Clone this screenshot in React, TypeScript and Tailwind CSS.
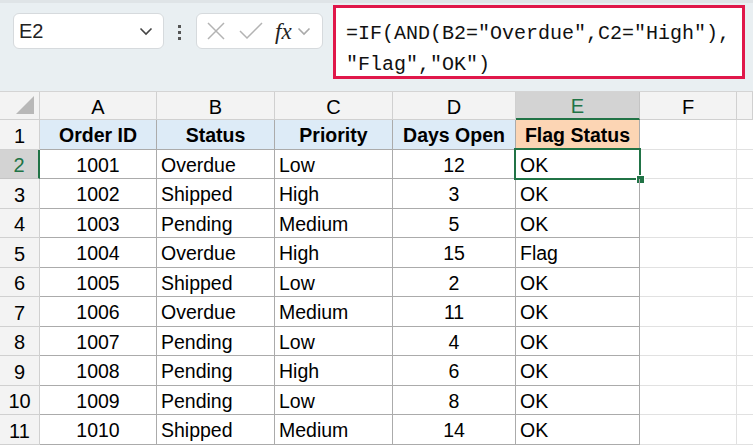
import React from "react";

const rows = [
  ["1001", "Overdue", "Low", "12", "OK"],
  ["1002", "Shipped", "High", "3", "OK"],
  ["1003", "Pending", "Medium", "5", "OK"],
  ["1004", "Overdue", "High", "15", "Flag"],
  ["1005", "Shipped", "Low", "2", "OK"],
  ["1006", "Overdue", "Medium", "11", "OK"],
  ["1007", "Pending", "Low", "4", "OK"],
  ["1008", "Pending", "High", "6", "OK"],
  ["1009", "Pending", "Low", "8", "OK"],
  ["1010", "Shipped", "Medium", "14", "OK"],
];

const headers = ["Order ID", "Status", "Priority", "Days Open", "Flag Status"];
const cols = ["A", "B", "C", "D", "E", "F", ""];

function Chevron({ className }: { className?: string }) {
  return (
    <svg width="14" height="9" viewBox="0 0 14 9" className={className}>
      <path d="M1.5 1.5 L7 7 L12.5 1.5" fill="none" stroke="currentColor" strokeWidth="1.6" />
    </svg>
  );
}

export default function App() {
  const cell = "h-[29.5px] flex items-center pt-[3px] border-r border-b border-[#ababab] text-[19.5px] text-black overflow-hidden whitespace-nowrap";
  return (
    <div className="w-[753px] h-[446px] overflow-hidden bg-white font-['Liberation_Sans',Arial,sans-serif]">
      {/* formula bar */}
      <div className="h-[91px] bg-[#e9eff2] border-t-[3px] border-[#dfe4e7] flex items-start">
        <div className="mt-[10px] ml-[13px] w-[151px] h-[36px] bg-white border border-[#d6dadd] rounded-[6px] flex items-center justify-between pl-[5px] pr-[10px]">
          <span className="text-[20px] text-[#222]">E2</span>
          <Chevron className="text-[#444]" />
        </div>
        <div className="mt-[22px] ml-[14px] w-[4px] flex flex-col gap-[3px]">
          <div className="w-[3px] h-[3px] bg-[#555]" />
          <div className="w-[3px] h-[3px] bg-[#555]" />
          <div className="w-[3px] h-[3px] bg-[#555]" />
        </div>
        <div className="mt-[10px] ml-[14px] w-[127px] h-[36px] bg-white border border-[#d6dadd] rounded-[6px] flex items-center pl-[9px]">
          <svg width="20" height="20" viewBox="0 0 20 20">
            <path d="M2 2 L18 18 M18 2 L2 18" stroke="#b3b3b3" strokeWidth="1.5" />
          </svg>
          <svg width="24" height="18" viewBox="0 0 24 18" className="ml-[13px]">
            <path d="M1 9 L8 16 L23 1" fill="none" stroke="#b3b3b3" strokeWidth="1.5" />
          </svg>
          <span className="ml-[12px] text-[23px] italic text-[#222] font-['Liberation_Serif',serif] leading-none">fx</span>
          <Chevron className="ml-[5px] text-[#aaa]" />
        </div>
        <div className="mt-[2px] ml-[10px] w-[412px] h-[74px] bg-white border-[3px] border-[#e0174a] pl-[10px] pt-[10px] font-['Liberation_Mono',monospace] text-[20px] leading-[31px] text-[#111] whitespace-pre">
          {'=IF(AND(B2="Overdue",C2="High"),\n"Flag","OK")'}
        </div>
      </div>

      {/* sheet */}
      <div className="grid grid-cols-[40px_117px_118px_118px_123px_124px_97px_1fr] border-t border-[#d4d4d4]">
        {/* column headers */}
        <div className="h-[28px] bg-[#f3f3f3] border-r border-b border-[#d0d0d0] relative">
          <svg width="18" height="18" viewBox="0 0 18 18" className="absolute right-[5px] bottom-[5px]">
            <path d="M18 0 L18 18 L0 18 Z" fill="#b8b8b8" />
          </svg>
        </div>
        {cols.map((c, i) =>
          c === "E" ? (
            <div key={i} className="h-[28px] pt-[2px] bg-[#d3d3d3] border-r border-[#c4c4c4] border-b-2 border-b-[#217346] flex items-center justify-center text-[20px] text-[#217346]">
              {c}
            </div>
          ) : (
            <div key={i} className="h-[28px] pt-[2px] bg-[#f3f3f3] border-r border-b border-[#d0d0d0] flex items-center justify-center text-[20px] text-black">
              {c}
            </div>
          )
        )}

        {/* row 1 */}
        <div className="h-[29.5px] pt-[3px] bg-[#f3f3f3] border-r border-b border-[#d0d0d0] flex items-center justify-center text-[20px] text-black">1</div>
        {headers.map((h, i) => (
          <div
            key={h}
            className={`${cell} justify-center font-bold ${i === 4 ? "bg-[#fcd5b4]" : "bg-[#ddebf7]"}`}
          >
            {h}
          </div>
        ))}
        <div className="h-[29.5px] border-r border-b border-[#e1e1e1]" />
        <div className="h-[29.5px] border-b border-[#e1e1e1]" />

        {rows.map((r, ri) => {
          const n = ri + 2;
          const sel = n === 2;
          return (
            <React.Fragment key={n}>
              <div
                className={`h-[29.5px] pt-[3px] flex items-center justify-center text-[20px] border-b ${
                  sel
                    ? "bg-[#d3d3d3] text-[#217346] border-r-2 border-r-[#217346] border-b-[#c4c4c4]"
                    : "bg-[#f3f3f3] text-black border-r border-[#d0d0d0]"
                }`}
              >
                {n}
              </div>
              <div className={`${cell} justify-center`}>{r[0]}</div>
              <div className={`${cell} pl-[4px]`}>{r[1]}</div>
              <div className={`${cell} pl-[4px]`}>{r[2]}</div>
              <div className={`${cell} justify-center`}>{r[3]}</div>
              <div className={`${cell} pl-[4px] relative overflow-visible`}>
                {r[4]}
                {sel && (
                  <>
                    <div className="absolute -left-[2px] -top-[2px] -right-[2px] -bottom-[2px] border-2 border-[#217346]" />
                    <div className="absolute -right-[6px] -bottom-[6px] w-[9px] h-[9px] bg-[#217346] border border-white" />
                  </>
                )}
              </div>
              <div className="h-[29.5px] border-r border-b border-[#e1e1e1]" />
              <div className="h-[29.5px] border-b border-[#e1e1e1]" />
            </React.Fragment>
          );
        })}
      </div>
    </div>
  );
}
